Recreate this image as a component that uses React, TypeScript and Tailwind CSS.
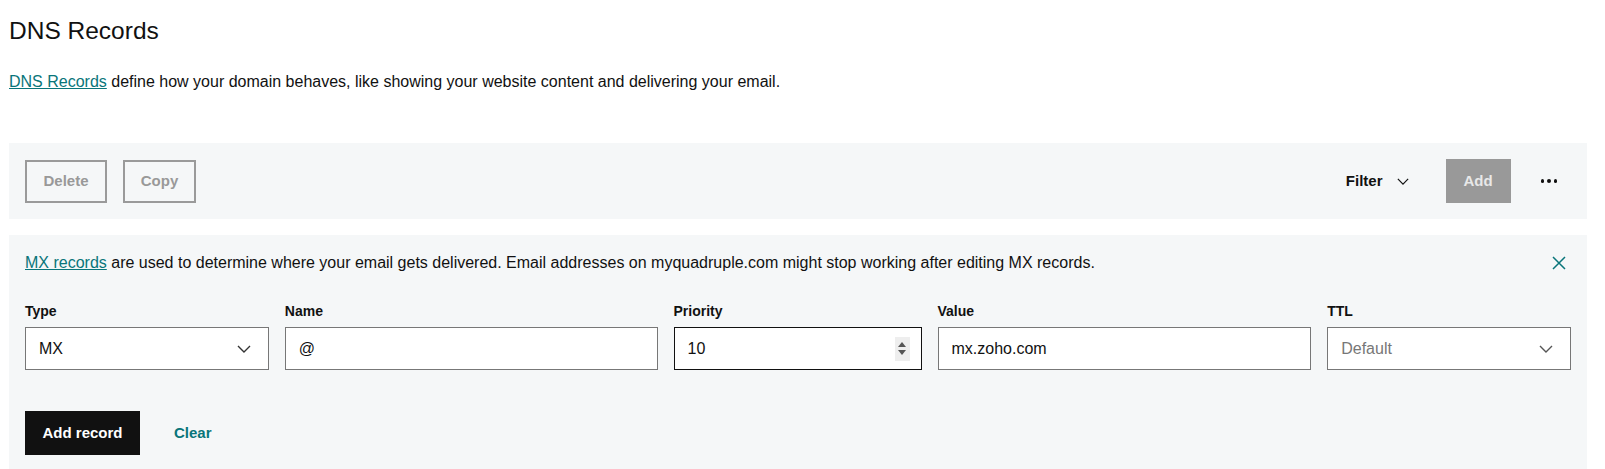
import { useState } from "react"

const font = { fontFamily: "'Liberation Sans', Arial, sans-serif" }

function Chevron({ className }: { className?: string }) {
  return (
    <svg viewBox="0 0 14 8" className={className} fill="none" stroke="currentColor" strokeWidth="1.4">
      <path d="M1 1l6 6 6-6" />
    </svg>
  )
}

function Field({ label, children }: { label: string; children: React.ReactNode }) {
  return (
    <div className="flex flex-col">
      <label className="h-5 mb-[6px] text-sm font-bold text-[#111] leading-5">{label}</label>
      {children}
    </div>
  )
}

function App() {
  const [priority, setPriority] = useState("10")
  const [name, setName] = useState("@")
  const [value, setValue] = useState("mx.zoho.com")

  return (
    <div className="min-h-screen bg-white pl-[9px] pr-[18px] pt-[15px] text-[#111]" style={font}>
      <h1 className="text-[24.5px] leading-8 font-normal">DNS Records</h1>
      <p className="mt-[23px] text-base leading-6">
        <a href="#" className="text-[#09757a] underline">DNS Records</a> define how your domain behaves, like showing your website content and delivering your email.
      </p>

      <div className="mt-[49px] h-[76px] bg-[#f5f7f8] px-4 flex items-center">
        <button className="h-[43px] w-[82px] border-2 border-[#9a9a9a] text-[15px] font-bold text-[#999]">Delete</button>
        <button className="ml-4 h-[43px] w-[73px] border-2 border-[#9a9a9a] text-[15px] font-bold text-[#999]">Copy</button>
        <div className="flex-1" />
        <button className="flex items-center text-[15px] font-bold text-[#111]">
          Filter
          <Chevron className="ml-[14px] w-3 h-[7px]" />
        </button>
        <button className="ml-[37px] h-[44px] w-[65px] bg-[#999] text-[15px] font-bold text-[#e8e8e8]">Add</button>
        <button className="ml-[30px] mr-[14px] flex gap-[3px] items-center">
          <span className="w-[3.5px] h-[3.5px] rounded-full bg-[#111]" />
          <span className="w-[3.5px] h-[3.5px] rounded-full bg-[#111]" />
          <span className="w-[3.5px] h-[3.5px] rounded-full bg-[#111]" />
        </button>
      </div>

      <div className="mt-4 min-h-[234px] bg-[#f5f7f8] px-4 pt-4">
        <div className="flex items-center">
          <p className="flex-1 text-base leading-6">
            <a href="#" className="text-[#09757a] underline">MX records</a> are used to determine where your email gets delivered. Email addresses on myquadruple.com might stop working after editing MX records.
          </p>
          <button className="mr-[5px] text-[#09757a]">
            <svg viewBox="0 0 14 14" className="w-[14px] h-[14px]" fill="none" stroke="currentColor" strokeWidth="1.5">
              <path d="M1 1l12 12M13 1L1 13" />
            </svg>
          </button>
        </div>

        <div className="mt-[26px] grid grid-cols-[244fr_373fr_246fr_374fr_244fr] gap-x-4">
          <Field label="Type">
            <div className="h-[43px] border border-[#777] bg-white flex items-center justify-between pl-[13px] pr-[17px] text-base">
              <span>MX</span>
              <Chevron className="w-[14px] h-[8px] text-[#333]" />
            </div>
          </Field>
          <Field label="Name">
            <input
              value={name}
              onChange={(e) => setName(e.target.value)}
              className="h-[43px] border border-[#777] bg-white px-[13px] text-base outline-none"
            />
          </Field>
          <Field label="Priority">
            <div className="h-[43px] border border-[#111] bg-white flex items-center pl-[13px] pr-[11px]">
              <input
                value={priority}
                onChange={(e) => setPriority(e.target.value)}
                className="flex-1 min-w-0 text-base outline-none bg-transparent"
              />
              <div className="w-[15px] h-[24px] bg-[#eee] flex flex-col items-center justify-center gap-[3px]">
                <span className="w-0 h-0 border-l-[4px] border-r-[4px] border-b-[5px] border-l-transparent border-r-transparent border-b-[#555]" />
                <span className="w-0 h-0 border-l-[4px] border-r-[4px] border-t-[5px] border-l-transparent border-r-transparent border-t-[#555]" />
              </div>
            </div>
          </Field>
          <Field label="Value">
            <input
              value={value}
              onChange={(e) => setValue(e.target.value)}
              className="h-[43px] border border-[#777] bg-white px-[13px] text-base outline-none"
            />
          </Field>
          <Field label="TTL">
            <div className="h-[43px] border border-[#777] bg-white flex items-center justify-between pl-[13px] pr-[17px] text-base text-[#777]">
              <span>Default</span>
              <Chevron className="w-[14px] h-[8px] text-[#555]" />
            </div>
          </Field>
        </div>

        <div className="mt-[41px] flex items-center pb-[14px]">
          <button className="h-[44px] w-[115px] bg-[#111] text-white text-[15px] font-bold">Add record</button>
          <button className="ml-[34px] text-[15px] font-bold text-[#09757a]">Clear</button>
        </div>
      </div>
    </div>
  )
}

export default App
